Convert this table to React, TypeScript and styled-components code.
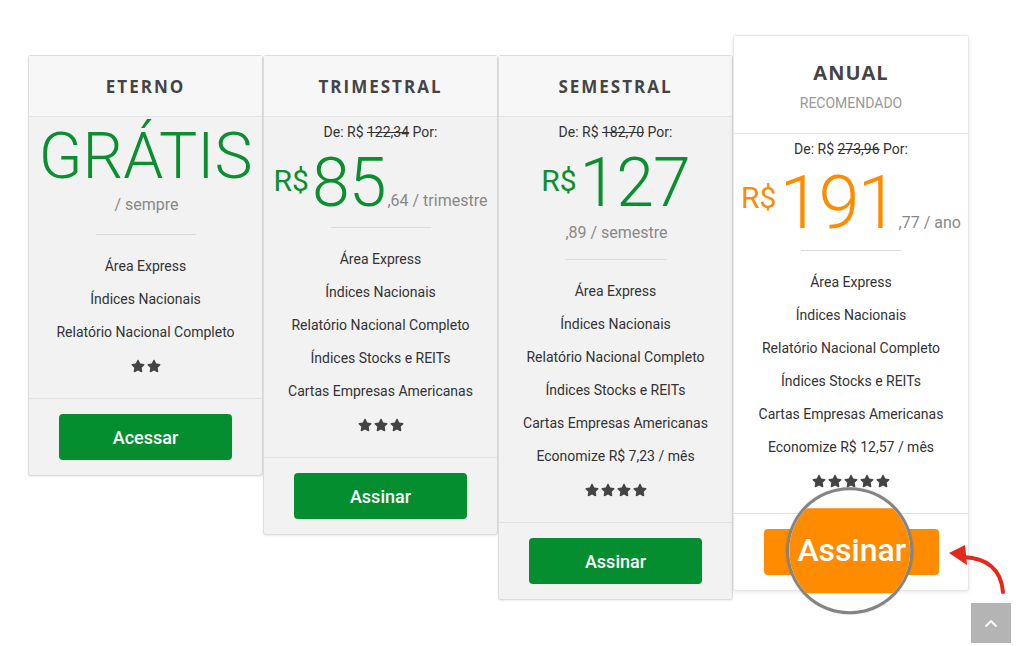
import { FC } from "react";
import styled, { createGlobalStyle, css } from "styled-components";
import { FaStar } from "react-icons/fa";

type Plan = {
  name: string;
  tag?: string;
  oldPrice?: string;
  currency?: string;
  amount: string;
  suffix: string;
  features: string[];
  stars: number;
  button: string;
  featured?: boolean;
};

const plans: Plan[] = [
  {
    name: "ETERNO",
    amount: "GRÁTIS",
    suffix: "/ sempre",
    features: ["Área Express", "Índices Nacionais", "Relatório Nacional Completo"],
    stars: 2,
    button: "Acessar",
  },
  {
    name: "TRIMESTRAL",
    oldPrice: "122,34",
    currency: "R$",
    amount: "85",
    suffix: ",64 / trimestre",
    features: [
      "Área Express",
      "Índices Nacionais",
      "Relatório Nacional Completo",
      "Índices Stocks e REITs",
      "Cartas Empresas Americanas",
    ],
    stars: 3,
    button: "Assinar",
  },
  {
    name: "SEMESTRAL",
    oldPrice: "182,70",
    currency: "R$",
    amount: "127",
    suffix: ",89 / semestre",
    features: [
      "Área Express",
      "Índices Nacionais",
      "Relatório Nacional Completo",
      "Índices Stocks e REITs",
      "Cartas Empresas Americanas",
      "Economize R$ 7,23 / mês",
    ],
    stars: 4,
    button: "Assinar",
  },
  {
    name: "ANUAL",
    tag: "RECOMENDADO",
    oldPrice: "273,96",
    currency: "R$",
    amount: "191",
    suffix: ",77 / ano",
    features: [
      "Área Express",
      "Índices Nacionais",
      "Relatório Nacional Completo",
      "Índices Stocks e REITs",
      "Cartas Empresas Americanas",
      "Economize R$ 12,57 / mês",
    ],
    stars: 5,
    button: "Assinar",
    featured: true,
  },
];

const GREEN = "#0a8f2f";
const ORANGE = "#ff8c00";

export default function App() {
  return (
    <>
      <GlobalStyle />
      <SPage>
        <SCards>
          {plans.map((plan) => (
            <PlanCard key={plan.name} plan={plan} />
          ))}
        </SCards>
        <SArrow width="75" height="60" viewBox="0 0 75 60">
          <path d="M19 17 C 40 18, 56 28, 58 52" fill="none" stroke="#e5281a" strokeWidth="4" strokeLinecap="round" />
          <polygon points="4,13 20,5 22,25" fill="#e5281a" />
        </SArrow>
        <SScrollTop>
          <svg width="14" height="9" viewBox="0 0 14 9">
            <path d="M1.5 7.5 L7 2 L12.5 7.5" fill="none" stroke="#fff" strokeWidth="1.8" />
          </svg>
        </SScrollTop>
      </SPage>
    </>
  );
}

const PlanCard: FC<{ plan: Plan }> = ({ plan }) => {
  const featured = !!plan.featured;
  const free = !plan.currency;
  return (
    <SCard $featured={featured}>
      <SHeader $featured={featured}>
        <STitle $featured={featured}>{plan.name}</STitle>
        {plan.tag && <STag>{plan.tag}</STag>}
      </SHeader>
      <SBody>
        {plan.oldPrice && (
          <SOldPrice>
            De: R$ <s>{plan.oldPrice}</s> Por:
          </SOldPrice>
        )}
        <SPriceRow $featured={featured}>
          {plan.currency && <SCurrency $lift={featured ? 20 : 15}>{plan.currency}</SCurrency>}
          <SAmount $size={free ? 64 : featured ? 74 : 68} $spacing={free ? 0 : featured ? -2 : -1}>
            {plan.amount}
          </SAmount>
          <SSuffix>{plan.suffix}</SSuffix>
        </SPriceRow>
        <SDivider $free={free} />
        <SFeatures>
          {plan.features.map((f) => (
            <li key={f}>{f}</li>
          ))}
          <SStars>
            {Array.from({ length: plan.stars }).map((_, i) => (
              <FaStar key={i} size={14} />
            ))}
          </SStars>
        </SFeatures>
      </SBody>
      <SFooter>
        <SButton $featured={featured}>{plan.button}</SButton>
        {featured && (
          <SLens>
            <SLensBand>{plan.button}</SLensBand>
          </SLens>
        )}
      </SFooter>
    </SCard>
  );
};

const GlobalStyle = createGlobalStyle`
  html, body {
    margin: 0;
    background: #fff;
    font-family: Roboto, "Liberation Sans", Arial, sans-serif;
    color: #333;
  }
  * { box-sizing: border-box; }
`;

const SPage = styled.div`
  position: relative;
  width: 1022px;
  height: 646px;
  overflow: hidden;
  padding: 35px 0 0 28px;
`;

const SCards = styled.div`
  display: flex;
  align-items: flex-start;
`;

const SCard = styled.div<{ $featured: boolean }>`
  width: 235px;
  margin-top: 20px;
  background: #f2f2f2;
  border: 1px solid #dcdcdc;
  border-radius: 3px;
  box-shadow: 0 1px 2px rgba(0, 0, 0, 0.08);
  text-align: center;
  ${(p) =>
    p.$featured &&
    css`
      width: 236px;
      margin-top: 0;
      background: #fff;
      border-color: #e6e6e6;
      box-shadow: 0 1px 4px rgba(0, 0, 0, 0.1);
      position: relative;
      z-index: 1;
    `}
`;

const SHeader = styled.div<{ $featured: boolean }>`
  height: ${(p) => (p.$featured ? 98 : 61)}px;
  display: flex;
  flex-direction: column;
  align-items: center;
  justify-content: center;
  gap: 9px;
  background: ${(p) => (p.$featured ? "#fff" : "#f7f7f7")};
  border-bottom: 1px solid #e4e4e4;
  padding-top: ${(p) => (p.$featured ? 4 : 2)}px;
`;

const STitle = styled.h2<{ $featured: boolean }>`
  margin: 0;
  font-family: "Open Sans", "DejaVu Sans", sans-serif;
  font-weight: 700;
  font-size: ${(p) => (p.$featured ? 20 : 17)}px;
  line-height: 24px;
  letter-spacing: ${(p) => (p.$featured ? 1 : 2)}px;
  color: #444;
`;

const STag = styled.div`
  font-size: 14px;
  line-height: 18px;
  color: #999;
`;

const SBody = styled.div`
  padding-top: 5px;
`;

const SOldPrice = styled.div`
  font-size: 14px;
  line-height: 20px;
  color: #333;
  margin-bottom: 4px;
  s {
    text-decoration: line-through;
  }
`;

const SPriceRow = styled.div<{ $featured: boolean }>`
  padding: 3px 0 0;
  font-size: 16px;
  line-height: 1;
  color: ${(p) => (p.$featured ? ORANGE : GREEN)};
  ${(p) => p.$featured && "white-space: nowrap;"}
`;

const SCurrency = styled.span<{ $lift: number }>`
  font-size: 30px;
  line-height: 30px;
  margin-right: 3px;
  vertical-align: ${(p) => p.$lift}px;
`;

const SAmount = styled.span<{ $size: number; $spacing: number }>`
  font-size: ${(p) => p.$size}px;
  line-height: ${(p) => p.$size}px;
  font-weight: 300;
  letter-spacing: ${(p) => p.$spacing}px;
`;

const SSuffix = styled.span`
  display: inline-block;
  font-size: 16px;
  line-height: 32px;
  color: #888;
  margin-left: 2px;
`;

const SDivider = styled.hr<{ $free: boolean }>`
  width: 100px;
  margin: ${(p) => (p.$free ? 13 : 10)}px auto 0;
  border: 0;
  border-top: 1px solid #dadada;
`;

const SFeatures = styled.ul`
  list-style: none;
  margin: 0;
  padding: 15px 0 16px;
  font-size: 14px;
  li {
    line-height: 33px;
  }
`;

const SStars = styled.li`
  display: flex;
  justify-content: center;
  align-items: center;
  gap: 2px;
  height: 33px;
  color: #444;
`;

const SFooter = styled.div`
  position: relative;
  border-top: 1px solid #e0e0e0;
  padding: 15px 0;
  display: flex;
  justify-content: center;
`;

const SButton = styled.button<{ $featured: boolean }>`
  width: ${(p) => (p.$featured ? 175 : 173)}px;
  height: 46px;
  border: 0;
  border-radius: 4px;
  background: ${(p) => (p.$featured ? ORANGE : "#058e2f")};
  color: #fff;
  font-family: Roboto, sans-serif;
  font-weight: 500;
  font-size: 18px;
  cursor: pointer;
`;

const SLens = styled.div`
  position: absolute;
  left: 50%;
  top: 50%;
  width: 127px;
  height: 127px;
  transform: translate(-51%, -51%);
  border-radius: 50%;
  border: 3px solid rgba(110, 110, 110, 0.85);
  background: #fff;
  overflow: hidden;
  display: flex;
  align-items: center;
  box-shadow: 0 0 2px rgba(0, 0, 0, 0.2);
`;

const SLensBand = styled.div`
  width: 100%;
  height: 85px;
  background: ${ORANGE};
  color: #fff;
  font-weight: 500;
  font-size: 32px;
  line-height: 85px;
  text-align: center;
  padding-left: 4px;
`;

const SArrow = styled.svg`
  position: absolute;
  left: 945px;
  top: 540px;
  z-index: 2;
`;

const SScrollTop = styled.div`
  position: absolute;
  left: 971px;
  top: 603px;
  width: 40px;
  height: 40px;
  background: #b4b4b4;
  display: flex;
  align-items: center;
  justify-content: center;
`;
